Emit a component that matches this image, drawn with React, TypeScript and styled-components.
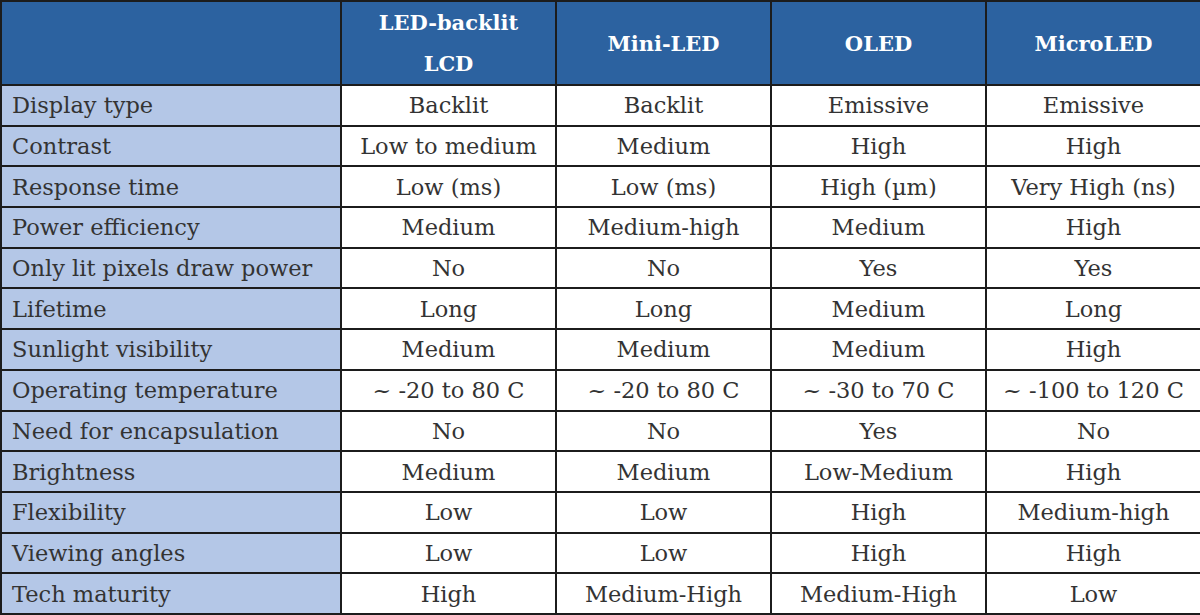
import styled, { createGlobalStyle } from "styled-components";

const GlobalStyle = createGlobalStyle`
  html, body {
    margin: 0;
    padding: 0;
    background: #ffffff;
  }
`;

const columns = ["LED-backlit LCD", "Mini-LED", "OLED", "MicroLED"];

const rows: [string, string, string, string, string][] = [
  ["Display type", "Backlit", "Backlit", "Emissive", "Emissive"],
  ["Contrast", "Low to medium", "Medium", "High", "High"],
  ["Response time", "Low (ms)", "Low (ms)", "High (µm)", "Very High (ns)"],
  ["Power efficiency", "Medium", "Medium-high", "Medium", "High"],
  ["Only lit pixels draw power", "No", "No", "Yes", "Yes"],
  ["Lifetime", "Long", "Long", "Medium", "Long"],
  ["Sunlight visibility", "Medium", "Medium", "Medium", "High"],
  ["Operating temperature", "~ -20 to 80 C", "~ -20 to 80 C", "~ -30 to 70 C", "~ -100 to 120 C"],
  ["Need for encapsulation", "No", "No", "Yes", "No"],
  ["Brightness", "Medium", "Medium", "Low-Medium", "High"],
  ["Flexibility", "Low", "Low", "High", "Medium-high"],
  ["Viewing angles", "Low", "Low", "High", "High"],
  ["Tech maturity", "High", "Medium-High", "Medium-High", "Low"],
];

const Table = styled.table`
  width: 1200px;
  height: 615px;
  border-collapse: collapse;
  table-layout: fixed;
  font-family: "DejaVu Serif", "Liberation Serif", serif;
  font-size: 22.5px;
  color: #333333;
`;

const Col = styled.col<{ $w: number }>`
  width: ${(p) => p.$w}px;
`;

const HeadCell = styled.th`
  height: 80px;
  background: #2c62a0;
  color: #ffffff;
  font-weight: bold;
  font-size: 21px;
  line-height: 41px;
  border: 2px solid #1c1c1c;
  padding: 0 30px;
  text-align: center;
`;

const LabelCell = styled.td`
  background: #b4c7e7;
  border: 2px solid #1c1c1c;
  padding: 0 0 0 10px;
  text-align: left;
  white-space: nowrap;
`;

const ValueCell = styled.td`
  background: #ffffff;
  border: 2px solid #1c1c1c;
  padding: 0;
  text-align: center;
  white-space: nowrap;
`;

const Row = styled.tr`
  height: 40.7px;
`;

export default function App() {
  return (
    <>
      <GlobalStyle />
      <Table>
        <colgroup>
          <Col $w={340} />
          <Col $w={215} />
          <Col $w={215} />
          <Col $w={215} />
          <Col $w={215} />
        </colgroup>
        <thead>
          <tr>
            <HeadCell />
            {columns.map((c) => (
              <HeadCell key={c}>{c}</HeadCell>
            ))}
          </tr>
        </thead>
        <tbody>
          {rows.map(([label, ...values]) => (
            <Row key={label}>
              <LabelCell>{label}</LabelCell>
              {values.map((v, i) => (
                <ValueCell key={i}>{v}</ValueCell>
              ))}
            </Row>
          ))}
        </tbody>
      </Table>
    </>
  );
}
